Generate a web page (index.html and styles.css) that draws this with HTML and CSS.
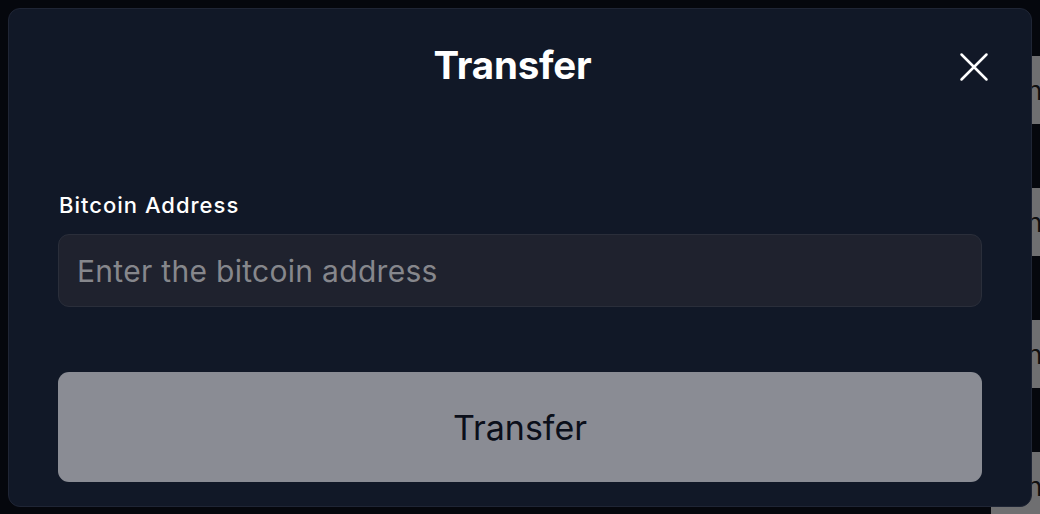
FILE: index.html
```html
<!DOCTYPE html>
<html lang="en">
<head>
<meta charset="utf-8">
<title>Transfer</title>
<link rel="stylesheet" href="styles.css">
</head>
<body>
<div class="page">
  <div class="row"><span>ne</span></div>
  <div class="row"><span>ne</span></div>
  <div class="row"><span>ne</span></div>
  <div class="row"><span>ne</span></div>
</div>
<div class="modal">
  <div class="modal-header">
    <h2 class="modal-title">Transfer</h2>
    <button class="close" aria-label="Close">
      <svg width="30" height="30" viewBox="0 0 30 30"><path d="M2.5 2.5 L27.5 27.5 M27.5 2.5 L2.5 27.5" stroke="#fff" stroke-width="2.5" stroke-linecap="round" fill="none"/></svg>
    </button>
  </div>
  <label class="label" for="addr">Bitcoin Address</label>
  <input id="addr" class="input" type="text" placeholder="Enter the bitcoin address">
  <button class="submit">Transfer</button>
</div>
</body>
</html>
```
FILE: styles.css
```css
* { box-sizing: border-box; }
html, body { margin: 0; padding: 0; }
body {
  width: 1040px;
  height: 514px;
  overflow: hidden;
  background: #05070d;
  font-family: Inter, "Noto Sans", sans-serif;
  position: relative;
}
.page {
  display: flex;
  flex-direction: column;
  gap: 64px;
  padding-top: 56px;
  padding-left: 991px;
}
.row {
  width: 120px;
  height: 68px;
  background: #6f6f71;
  display: flex;
  align-items: center;
  padding-left: 36px;
  color: #101010;
  font-size: 26px;
}
.modal {
  position: absolute;
  left: 8px;
  top: 8px;
  width: 1024px;
  height: 499px;
  background: #111827;
  border: 1px solid #1f2535;
  border-radius: 12px;
  padding: 0 49px;
  display: flex;
  flex-direction: column;
}
.modal-header {
  height: 112px;
  flex: none;
  display: flex;
  align-items: center;
  justify-content: center;
  position: relative;
}
.modal-title {
  margin: -1px 15px 0 0;
  color: #fff;
  font-size: 38.5px;
  font-weight: 700;
  letter-spacing: -0.2px;
}
.close {
  position: absolute;
  right: -7px;
  top: 43px;
  width: 30px;
  height: 30px;
  padding: 0;
  border: 0;
  background: none;
  display: flex;
}
.label {
  margin-top: 71px;
  color: #fff;
  font-size: 22px;
  font-weight: 500;
  line-height: 26px;
  letter-spacing: 1px;
  margin-left: 1px;
}
.input {
  flex: none;
  margin-top: 16px;
  height: 73px;
  width: 100%;
  background: #1f222e;
  border: 1px solid #2a2e3a;
  border-radius: 11px;
  padding: 0 18px;
  font-family: inherit;
  font-size: 30px;
  letter-spacing: 0.3px;
  color: #fff;
  outline: none;
}
.input::placeholder { color: #86878c; }
.submit {
  flex: none;
  margin-top: 65px;
  height: 110px;
  width: 100%;
  background: #8a8c94;
  border: 0;
  border-radius: 11px;
  color: #0b0f1a;
  font-family: inherit;
  font-size: 34px;
  font-weight: 400;
}
```
